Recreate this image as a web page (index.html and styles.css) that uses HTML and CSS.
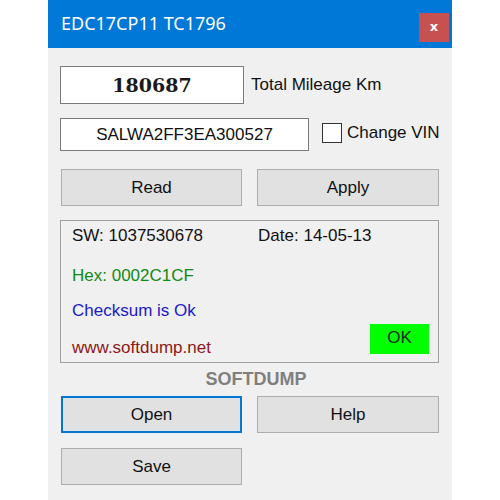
FILE: index.html
```html
<!DOCTYPE html>
<html>
<head>
<meta charset="utf-8">
<link rel="stylesheet" href="styles.css">
</head>
<body>
<div class="window">
  <div class="titlebar">
    <span class="title">EDC17CP11 TC1796</span>
    <div class="close">x</div>
  </div>
  <div class="content">
    <div class="row row-mileage">
      <div class="field field-mileage">180687</div>
      <span class="label">Total Mileage Km</span>
    </div>
    <div class="row row-vin">
      <div class="field field-vin">SALWA2FF3EA300527</div>
      <div class="checkbox"></div>
      <span class="label label-check">Change VIN</span>
    </div>
    <div class="btn-row btn-row-top">
      <div class="btn">Read</div>
      <div class="btn">Apply</div>
    </div>
    <div class="info">
      <div class="info-line line-1"><span>SW: 1037530678</span><span class="date">Date: 14-05-13</span></div>
      <div class="info-line line-2 hex">Hex: 0002C1CF</div>
      <div class="info-line line-3 check">Checksum is Ok</div>
      <div class="info-line line-4"><span class="web">www.softdump.net</span><div class="ok">OK</div></div>
    </div>
    <div class="brand">SOFTDUMP</div>
    <div class="btn-row btn-row-open">
      <div class="btn btn-focus">Open</div>
      <div class="btn">Help</div>
    </div>
    <div class="btn-row btn-row-save">
      <div class="btn">Save</div>
    </div>
  </div>
</div>
</body>
</html>
```
FILE: styles.css
```css
html, body {
  margin: 0;
  padding: 0;
  background: #ffffff;
}
body {
  width: 500px;
  height: 500px;
  overflow: hidden;
  font-family: "Liberation Sans", Arial, sans-serif;
  font-size: 17px;
  color: #111;
}
.window {
  margin-left: 48px;
  width: 404px;
  height: 500px;
  background: #f0f0f0;
}
.titlebar {
  height: 48px;
  box-sizing: border-box;
  background: #0078d7;
  display: flex;
  justify-content: space-between;
  align-items: flex-start;
  padding: 11px 3px 0 13px;
}
.title {
  font-family: "Noto Sans", sans-serif;
  font-size: 18px;
  line-height: 24px;
  color: #ffffff;
}
.close {
  margin-top: 2px;
  width: 30px;
  height: 29px;
  background: #c75050;
  color: #ffffff;
  font-family: "DejaVu Sans", sans-serif;
  font-weight: bold;
  font-size: 13px;
  line-height: 27px;
  text-align: center;
}
.content {
  padding: 18px 0 0 12px;
}
.row {
  display: flex;
  align-items: center;
}
.field {
  box-sizing: border-box;
  background: #ffffff;
  border: 1px solid #7a7a7a;
  text-align: center;
}
.field-mileage {
  width: 184px;
  height: 38px;
  font-family: "DejaVu Serif", serif;
  font-weight: bold;
  font-size: 19px;
  line-height: 36px;
  color: #1a1a1a;
}
.label {
  margin-left: 7px;
  line-height: 20px;
}
.row-vin {
  margin-top: 14px;
}
.field-vin {
  width: 249px;
  height: 33px;
  line-height: 31px;
}
.checkbox {
  margin-left: 13px;
  width: 20px;
  height: 20px;
  box-sizing: border-box;
  border: 1px solid #333333;
  background: #ffffff;
  margin-top: -3px;
}
.label-check {
  margin-left: 5px;
  margin-top: -3px;
}
.btn-row {
  display: flex;
  gap: 15px;
  margin-left: 1px;
}
.btn {
  box-sizing: border-box;
  width: 181px;
  height: 37px;
  background: #e1e1e1;
  border: 1px solid #adadad;
  text-align: center;
  line-height: 35px;
  color: #111;
}
.btn + .btn {
  width: 182px;
}
.btn-focus {
  border: 2px solid #0078d7;
  line-height: 33px;
}
.btn-row-top {
  margin-top: 18px;
}
.info {
  margin-top: 14px;
  width: 379px;
  height: 143px;
  box-sizing: border-box;
  border: 1px solid #a0a0a0;
  padding: 5px 9px 0 11px;
}
.info-line {
  line-height: 20px;
  display: flex;
}
.date {
  margin-left: 55px;
}
.line-2 {
  margin-top: 20px;
}
.line-3 {
  margin-top: 15px;
}
.line-4 {
  margin-top: 17px;
  justify-content: space-between;
  align-items: flex-start;
}
.hex {
  color: #138a13;
}
.check {
  color: #1a1acc;
}
.web {
  color: #8e1818;
}
.ok {
  margin-top: -14px;
  width: 59px;
  height: 30px;
  background: #00ff00;
  text-align: center;
  line-height: 28px;
  color: #1a2a1a;
}
.brand {
  margin-top: 6px;
  text-align: center;
  width: 392px;
  font-weight: bold;
  font-size: 18px;
  line-height: 20px;
  color: #7f7f7f;
}
.btn-row-open {
  margin-top: 7px;
}
.btn-row-save {
  margin-top: 15px;
}
```
